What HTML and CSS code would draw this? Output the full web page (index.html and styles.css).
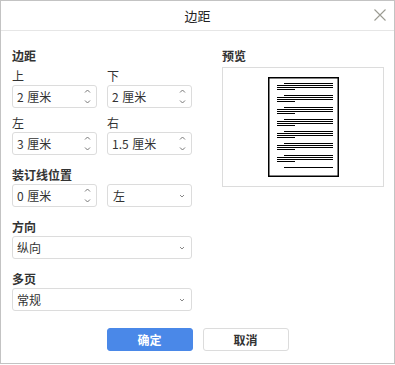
FILE: index.html
```html
<!DOCTYPE html>
<html lang="zh">
<head>
    <meta charset="UTF-8">
    <meta name="viewport" content="width=device-width, initial-scale=1.0">
    <title>边距</title>
    <link rel="stylesheet" href="styles.css">
</head>
<body>

    <div class="dialog">
        <!-- Header -->
        <div class="dialog-header">
            <span class="dialog-title">边距</span>
            <svg class="close-icon" width="12" height="12" viewBox="0 0 12 12">
                <path d="M0.5 0.5 L11.5 11.5 M11.5 0.5 L0.5 11.5" stroke="#9b9b92" stroke-width="1.1" fill="none"/>
            </svg>
        </div>

        <div class="dialog-body">
            <div class="left-col">
                <!-- Margins -->
                <div class="group">
                    <div class="section-title">边距</div>
                    <div class="field-grid">
                        <div class="field">
                            <div class="field-label">上</div>
                            <div class="input-box"><span>2 厘米</span>
                                <svg class="spin" width="7" height="17" viewBox="0 0 7 17"><path d="M1 4.5 L3.5 2 L6 4.5 M1 12.5 L3.5 15 L6 12.5" stroke="#777" stroke-width="1" fill="none"/></svg>
                            </div>
                        </div>
                        <div class="field">
                            <div class="field-label">下</div>
                            <div class="input-box"><span>2 厘米</span>
                                <svg class="spin" width="7" height="17" viewBox="0 0 7 17"><path d="M1 4.5 L3.5 2 L6 4.5 M1 12.5 L3.5 15 L6 12.5" stroke="#777" stroke-width="1" fill="none"/></svg>
                            </div>
                        </div>
                        <div class="field">
                            <div class="field-label">左</div>
                            <div class="input-box"><span>3 厘米</span>
                                <svg class="spin" width="7" height="17" viewBox="0 0 7 17"><path d="M1 4.5 L3.5 2 L6 4.5 M1 12.5 L3.5 15 L6 12.5" stroke="#777" stroke-width="1" fill="none"/></svg>
                            </div>
                        </div>
                        <div class="field">
                            <div class="field-label">右</div>
                            <div class="input-box"><span>1.5 厘米</span>
                                <svg class="spin" width="7" height="17" viewBox="0 0 7 17"><path d="M1 4.5 L3.5 2 L6 4.5 M1 12.5 L3.5 15 L6 12.5" stroke="#777" stroke-width="1" fill="none"/></svg>
                            </div>
                        </div>
                    </div>
                </div>

                <!-- Gutter -->
                <div class="group">
                    <div class="field-label bold">装订线位置</div>
                    <div class="field-grid">
                        <div class="input-box"><span>0 厘米</span>
                            <svg class="spin" width="7" height="17" viewBox="0 0 7 17"><path d="M1 4.5 L3.5 2 L6 4.5 M1 12.5 L3.5 15 L6 12.5" stroke="#777" stroke-width="1" fill="none"/></svg>
                        </div>
                        <div class="input-box select"><span>左</span>
                            <svg class="caret" width="6" height="4" viewBox="0 0 6 4"><path d="M1 1 L3 3 L5 1" stroke="#888" stroke-width="1" fill="none"/></svg>
                        </div>
                    </div>
                </div>

                <!-- Orientation -->
                <div class="group">
                    <div class="field-label bold">方向</div>
                    <div class="input-box"><span>纵向</span>
                        <svg class="caret" width="6" height="4" viewBox="0 0 6 4"><path d="M1 1 L3 3 L5 1" stroke="#888" stroke-width="1" fill="none"/></svg>
                    </div>
                </div>

                <!-- Pages -->
                <div class="group">
                    <div class="field-label bold">多页</div>
                    <div class="input-box"><span>常规</span>
                        <svg class="caret" width="6" height="4" viewBox="0 0 6 4"><path d="M1 1 L3 3 L5 1" stroke="#888" stroke-width="1" fill="none"/></svg>
                    </div>
                </div>
            </div>

            <!-- Preview -->
            <div class="right-col">
                <div class="section-title">预览</div>
                <div class="preview-box">
                    <svg width="71" height="100" viewBox="0 0 71 100">
                        <rect x="0.75" y="0.75" width="69.5" height="98.5" fill="#fff" stroke="#000" stroke-width="1.5"/>
                        <g fill="#000">
                            <rect x="16" y="6" width="49" height="1"/><rect x="9" y="8" width="56" height="1"/><rect x="9" y="10" width="56" height="1"/><rect x="9" y="12" width="18" height="1"/>
                            <rect x="16" y="18" width="49" height="1"/><rect x="9" y="20" width="56" height="1"/><rect x="9" y="22" width="56" height="1"/><rect x="9" y="24" width="18" height="1"/>
                            <rect x="16" y="30" width="49" height="1"/><rect x="9" y="32" width="56" height="1"/><rect x="9" y="34" width="56" height="1"/><rect x="9" y="36" width="18" height="1"/>
                            <rect x="16" y="42" width="49" height="1"/><rect x="9" y="44" width="56" height="1"/><rect x="9" y="46" width="56" height="1"/><rect x="9" y="48" width="18" height="1"/>
                            <rect x="16" y="54" width="49" height="1"/><rect x="9" y="56" width="56" height="1"/><rect x="9" y="58" width="56" height="1"/><rect x="9" y="60" width="18" height="1"/>
                            <rect x="16" y="66" width="49" height="1"/><rect x="9" y="68" width="56" height="1"/><rect x="9" y="70" width="56" height="1"/><rect x="9" y="72" width="18" height="1"/>
                            <rect x="16" y="78" width="49" height="1"/><rect x="9" y="80" width="56" height="1"/><rect x="9" y="82" width="56" height="1"/><rect x="9" y="84" width="18" height="1"/>
                            <rect x="16" y="90" width="49" height="1"/>
                        </g>
                    </svg>
                </div>
            </div>
        </div>

        <!-- Footer -->
        <div class="dialog-footer">
            <button class="btn btn-primary">确定</button>
            <button class="btn">取消</button>
        </div>
    </div>

</body>
</html>
```

FILE: styles.css
```css
/* General */
body {
    margin: 0;
    padding: 0;
    background: #fff;
    font-family: "Noto Sans CJK SC", "Liberation Sans", sans-serif;
    font-size: 12px;
    color: #333;
}

.dialog {
    width: 395px;
    height: 364px;
    box-sizing: border-box;
    border: 1px solid #c3c3c3;
    background: #fff;
}

/* Header */
.dialog-header {
    height: 29px;
    border-bottom: 1px solid #e6e6e6;
    display: flex;
    align-items: center;
    justify-content: center;
    position: relative;
}

.dialog-title {
    font-size: 13px;
    line-height: 29px;
    color: #222;
}

.close-icon {
    position: absolute;
    right: 8px;
    top: 8px;
}

/* Body */
.dialog-body {
    display: flex;
    gap: 30px;
    padding: 16px 10px 0 11px;
}

.left-col {
    width: 180px;
    display: flex;
    flex-direction: column;
    gap: 11px;
}

.right-col {
    flex: 1;
}

.section-title {
    font-weight: bold;
    line-height: 18px;
    margin-bottom: 2px;
}

.field-label {
    line-height: 18px;
}

.bold {
    font-weight: bold;
}

.field-grid {
    display: grid;
    grid-template-columns: 85px 85px;
    column-gap: 10px;
    row-gap: 6px;
}

/* Inputs */
.input-box {
    height: 23px;
    box-sizing: border-box;
    border: 1px solid #dcdcdc;
    border-radius: 3px;
    display: flex;
    align-items: center;
    justify-content: space-between;
    padding: 0 5px 0 4px;
    line-height: 21px;
    word-spacing: 1px;
}

.input-box.select {
    padding-left: 5px;
}

.spin {
    display: block;
}

.caret {
    display: block;
    margin-right: 1px;
}

/* Preview */
.preview-box {
    height: 120px;
    box-sizing: border-box;
    border: 1px solid #dcdcdc;
    display: flex;
    align-items: center;
    justify-content: center;
}

/* Footer */
.dialog-footer {
    display: flex;
    justify-content: center;
    gap: 10px;
    margin-top: 17px;
}

.btn {
    width: 86px;
    height: 23px;
    box-sizing: border-box;
    border: 1px solid #dcdcdc;
    border-radius: 3px;
    background: #fff;
    font-family: inherit;
    font-size: 12px;
    font-weight: bold;
    color: #333;
    padding: 0;
}

.btn-primary {
    background: #4a88e8;
    border-color: #4a88e8;
    color: #fff;
}
```
